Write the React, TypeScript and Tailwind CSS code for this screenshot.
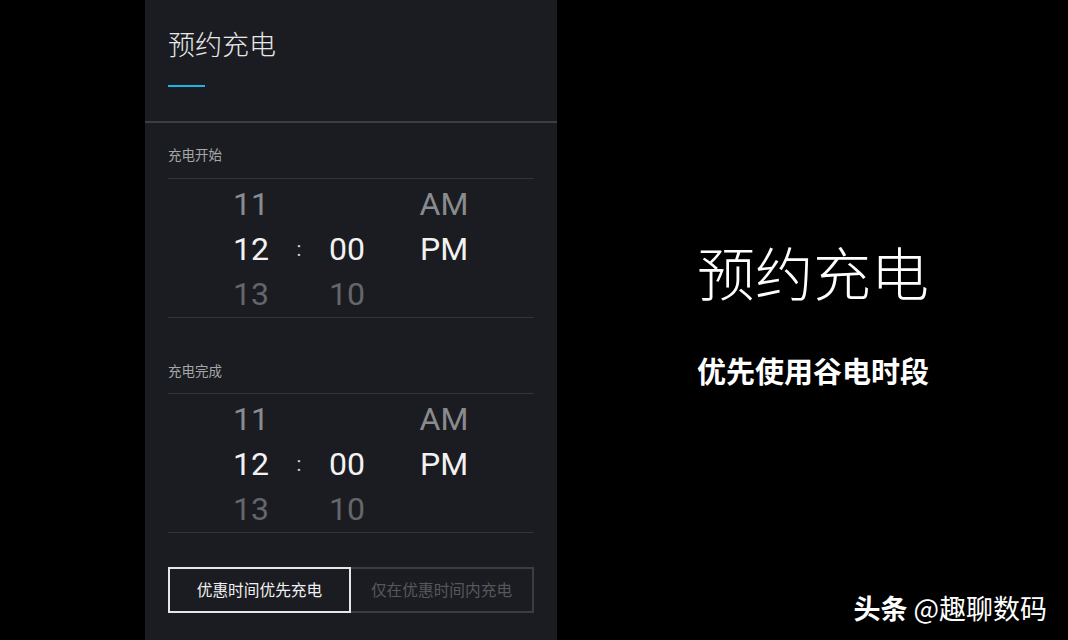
import React from "react";

const cjk = { fontFamily: '"Noto Sans CJK SC", "Noto Sans", sans-serif' };
const num = { fontFamily: 'Roboto, "Noto Sans", sans-serif' };

function Picker() {
  const dim1 = "text-[#8a8b8e]";
  const dim2 = "text-[#65666a]";
  const sel = "text-[#f2f2f2]";
  return (
    <div className="flex pt-[3px]" style={num}>
      <div className="ml-[53px] flex w-[60px] flex-col text-center text-[32px]">
        <div className={`h-[45px] leading-[45px] ${dim1}`}>11</div>
        <div className={`h-[45px] leading-[45px] ${sel}`}>12</div>
        <div className={`h-[45px] leading-[45px] ${dim2}`}>13</div>
      </div>
      <div className="flex w-[36px] flex-col text-center text-[20px]">
        <div className="h-[45px]" />
        <div className="h-[45px] leading-[45px] text-[#cfcfcf]">:</div>
        <div className="h-[45px]" />
      </div>
      <div className="flex w-[60px] flex-col text-center text-[32px]">
        <div className="h-[45px]" />
        <div className={`h-[45px] leading-[45px] ${sel}`}>00</div>
        <div className={`h-[45px] leading-[45px] ${dim2}`}>10</div>
      </div>
      <div className="ml-[27px] flex w-[80px] flex-col text-center text-[32px]">
        <div className={`h-[45px] leading-[45px] ${dim1}`}>AM</div>
        <div className={`h-[45px] leading-[45px] ${sel}`}>PM</div>
        <div className="h-[45px]" />
      </div>
    </div>
  );
}

export default function App() {
  return (
    <div className="relative flex h-[640px] w-[1068px] overflow-hidden bg-black" style={cjk}>
      <div className="w-[145px] shrink-0" />
      <div className="flex h-[640px] w-[412px] shrink-0 flex-col bg-[#1b1c21]">
        <div className="px-[23px] pt-[26px]">
          <div className="h-[36px] text-[27px] leading-[36px] font-light text-[#e8e8e8]">预约充电</div>
          <div className="mt-[23px] h-[2px] w-[37px] bg-[#1cb6e4]" />
        </div>
        <div className="mt-[34px] h-[2px] w-full bg-[#3d3e42]" />
        <div className="flex flex-col px-[23px]">
          <div className="mt-[21px] h-[20px] text-[13.5px] leading-[20px] text-[#a6a6a8]">充电开始</div>
          <div className="mt-[14px] h-px bg-[#34353a]" />
          <Picker />
          <div className="h-px bg-[#34353a]" />
          <div className="mt-[42px] h-[20px] text-[13.5px] leading-[20px] text-[#a6a6a8]">充电完成</div>
          <div className="mt-[13px] h-px bg-[#34353a]" />
          <Picker />
          <div className="h-px bg-[#34353a]" />
          <div className="mt-[34px] flex h-[46px]">
            <div className="flex w-[183px] items-center justify-center border-2 border-[#e6e6e6] text-[15.7px] text-[#f0f0f0]">
              优惠时间优先充电
            </div>
            <div className="flex w-[183px] items-center justify-center border-2 border-l-0 border-[#3c3d41] text-[15.7px] text-[#56575b]">
              仅在优惠时间内充电
            </div>
          </div>
        </div>
      </div>
      <div className="flex flex-col pl-[140px] pt-[236px]">
        <div className="h-[70px] text-[58px] leading-[70px] font-extralight text-white">预约充电</div>
        <div className="mt-[46px] h-[36px] text-[29px] leading-[36px] font-bold text-white">优先使用谷电时段</div>
      </div>
      <div
        className="absolute right-[21px] bottom-[16px] flex items-baseline text-[27px] leading-[32px] text-white"
        style={{ textShadow: "0 0 3px rgba(0,0,0,0.8)" }}
      >
        <span className="font-bold">头条</span>
        <span className="ml-[6px]">@趣聊数码</span>
      </div>
    </div>
  );
}
